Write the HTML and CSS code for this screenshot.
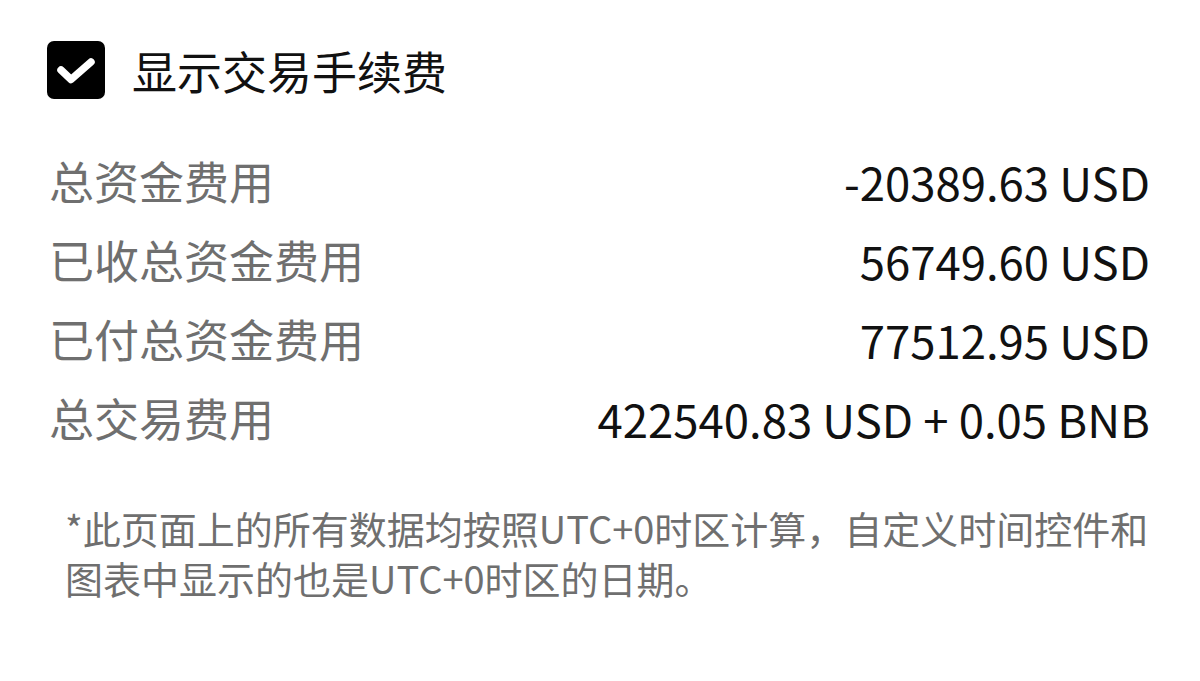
FILE: index.html
```html
<!DOCTYPE html>
<html lang="zh-CN">
<head>
<meta charset="utf-8">
<link rel="stylesheet" href="styles.css">
</head>
<body>
<div class="page">
  <div class="check-row">
    <span class="checkbox">
      <svg viewBox="0 0 58 58" width="58" height="58"><path d="M14 29 L24 38.5 L44 21" fill="none" stroke="#fff" stroke-width="7.5" stroke-linecap="round" stroke-linejoin="round"/></svg>
    </span>
    <span class="check-label">显示交易手续费</span>
  </div>
  <div class="rows">
    <div class="row"><span class="label">总资金费用</span><span class="value">-20389.63 USD</span></div>
    <div class="row"><span class="label">已收总资金费用</span><span class="value">56749.60 USD</span></div>
    <div class="row"><span class="label">已付总资金费用</span><span class="value">77512.95 USD</span></div>
    <div class="row"><span class="label">总交易费用</span><span class="value">422540.83 USD + 0.05 BNB</span></div>
  </div>
  <p class="note">*此页面上的所有数据均按照UTC+0时区计算，自定义时间控件和图表中显示的也是UTC+0时区的日期。</p>
</div>
</body>
</html>
```
FILE: styles.css
```css
html, body {
  margin: 0;
  padding: 0;
  background: #fff;
}
body {
  font-family: "Noto Sans CJK SC", "Noto Sans", sans-serif;
  color: #1e2026;
}
.page {
  padding: 41px 50px 0 47px;
}
.check-row {
  display: flex;
  align-items: center;
  gap: 27px;
  height: 58px;
}
.checkbox {
  width: 58px;
  height: 58px;
  background: #000;
  border-radius: 7px;
  display: flex;
}
.check-label {
  font-size: 45px;
  color: #111;
}
.rows {
  margin-top: 42px;
  padding-left: 2px;
}
.row {
  display: flex;
  justify-content: space-between;
  align-items: center;
  height: 79px;
}
.label {
  font-size: 45px;
  color: #6f6f6f;
}
.value {
  font-size: 45.5px;
  color: #111;
}
.note {
  margin: 46px 0 0 18px;
  font-size: 38px;
  line-height: 50px;
  color: #6f6f6f;
}
```
